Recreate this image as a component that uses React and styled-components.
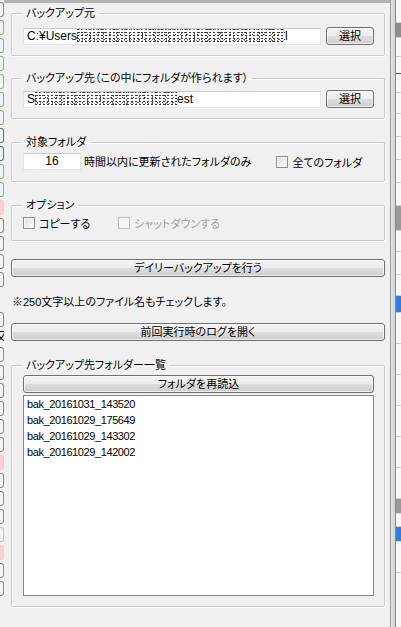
import React from "react";
import styled, {createGlobalStyle} from "styled-components";

const GlobalStyle = createGlobalStyle`
  html, body {
    margin: 0;
    padding: 0;
    background: #f0f0f0;
  }
  body {
    font-family: "Liberation Sans", "Noto Sans CJK JP", sans-serif;
    font-size: 11px;
    color: #000;
    font-feature-settings: "palt";
  }
`;

const Screen = styled.div`
  display: flex;
  width: 401px;
  height: 627px;
  overflow: hidden;
  background: #f0f0f0;
`;

const LeftStrip = styled.div`
  width: 4px;
  flex: 0 0 4px;
  display: flex;
  flex-direction: column;
  gap: 3px;
  padding-top: 2px;
  overflow: hidden;
`;

const StripTab = styled.div`
  flex: 0 0 auto;
  height: ${(p) => p.$h || 15}px;
  margin-top: ${(p) => p.$mt || 0}px;
  border: 1px solid ${(p) => p.$border || "#8a8a8a"};
  border-left: none;
  border-radius: 0 3px 3px 0;
  background: ${(p) => p.$fill || "#f4f4f4"};
  box-sizing: border-box;
`;

const StripChar = styled.div`
  height: 14px;
  margin-left: -5px;
  font-size: 12px;
  line-height: 14px;
`;

const Form = styled.div`
  flex: 1 1 auto;
  display: flex;
  flex-direction: column;
  border-top: 3px solid #b4b4b4;
  padding: 0 5px 0 7px;
`;

const Group = styled.fieldset`
  margin: ${(p) => p.$mt || 0}px 0 0;
  height: ${(p) => p.$h}px;
  box-sizing: border-box;
  padding: ${(p) => p.$pt || 4}px 10px 0 11px;
  border: 1px solid #c9c9c9;
  border-radius: 2px;
  box-shadow: inset 1px 1px 0 #fff, 1px 1px 0 #fff;
  min-width: 0;
  display: flex;
  flex-direction: column;
`;

const Legend = styled.legend`
  padding: 0 4px;
  margin-left: -1px;
  line-height: 14px;
  height: 14px;
`;

const Row = styled.div`
  display: flex;
  align-items: center;
  gap: ${(p) => p.$gap || 0}px;
`;

const TextBox = styled.div`
  flex: ${(p) => (p.$w ? `0 0 ${p.$w}px` : "1 1 auto")};
  height: 17px;
  box-sizing: border-box;
  background: #fff;
  border: 1px solid #e2e6ea;
  border-top-color: #c6cbd1;
  padding: 0 3px;
  font-size: 12px;
  line-height: 15px;
  white-space: nowrap;
  overflow: hidden;
  text-align: ${(p) => p.$align || "left"};
`;

const Noise = styled.span`
  display: inline-block;
  vertical-align: -3px;
  width: ${(p) => p.$w}px;
  height: 14px;
  background-image:
    radial-gradient(circle, #444 0.55px, transparent 0.85px),
    radial-gradient(circle, #777 0.6px, transparent 0.9px),
    radial-gradient(circle, #222 0.5px, transparent 0.8px),
    radial-gradient(circle, #999 0.6px, transparent 0.9px),
    radial-gradient(circle, #555 0.5px, transparent 0.8px),
    radial-gradient(circle, #333 0.5px, transparent 0.8px);
  background-size: 5px 7px, 7px 5px, 11px 9px, 3px 11px, 13px 4px, 4px 3px;
  background-position: 0 0, 2px 3px, 5px 1px, 1px 6px, 7px 2px, 3px 2px;
`;

const Button = styled.button`
  display: block;
  flex: ${(p) => (p.$w ? `0 0 ${p.$w}px` : "0 0 auto")};
  width: ${(p) => (p.$w ? `${p.$w}px` : "100%")};
  height: 18px;
  margin: ${(p) => p.$mt || 0}px 0 0;
  padding: 0;
  box-sizing: border-box;
  border: 1px solid #707070;
  border-radius: 3px;
  background: linear-gradient(#f3f3f3 0%, #ececec 48%, #dddddd 52%, #cfcfcf 100%);
  box-shadow: inset 0 0 0 1px rgba(255, 255, 255, 0.6);
  font: inherit;
  line-height: 15px;
  color: #000;
  text-align: center;
`;

const Label = styled.span`
  margin-left: ${(p) => p.$ml || 0}px;
  white-space: nowrap;
  line-height: 16px;
`;

const CheckLabel = styled.label`
  display: flex;
  align-items: center;
  gap: 4px;
  flex: ${(p) => (p.$w ? `0 0 ${p.$w}px` : "0 0 auto")};
  margin-left: ${(p) => p.$ml || 0}px;
  height: 16px;
  white-space: nowrap;
  color: ${(p) => (p.$disabled ? "#a0a0a0" : "#000")};
`;

const CheckBox = styled.span`
  width: 12px;
  height: 12px;
  box-sizing: border-box;
  border: 1px solid ${(p) => (p.$disabled ? "#c0c0c0" : "#8e8f8f")};
  background: ${(p) =>
    p.$disabled
      ? "#f4f4f4"
      : "linear-gradient(135deg, #dcdcdc 0%, #f0f0f0 60%, #fbfbfb 100%)"};
  box-shadow: inset 0 0 0 1px ${(p) => (p.$disabled ? "#f4f4f4" : "#f5f5f5")};
`;

const Note = styled.div`
  margin-top: 18px;
  height: 14px;
  line-height: 14px;
  padding-left: 1px;
  white-space: nowrap;
`;

const ListBox = styled.div`
  margin-top: 2px;
  height: 201px;
  box-sizing: border-box;
  background: #fff;
  border: 1px solid #828790;
  padding: 0 3px;
`;

const ListItem = styled.div`
  font-family: "Liberation Sans", sans-serif;
  font-size: 11px;
  line-height: 16px;
  letter-spacing: -0.4px;
`;

const RightFrame = styled.div`
  flex: 0 0 11px;
  display: flex;
`;

const FrameEdge = styled.div`
  flex: 0 0 6px;
  box-sizing: border-box;
  border-left: 1px solid #9a9a9a;
  border-right: 1px solid #8c8c8c;
  background: linear-gradient(90deg, #e6e6e6, #cfcfcf);
`;

const OtherPane = styled.div`
  flex: 1 1 auto;
  display: flex;
  flex-direction: column;
  background: #f7f7f7;
`;

const PaneBit = styled.div`
  flex: 0 0 ${(p) => p.$h}px;
  background: ${(p) => p.$bg || "transparent"};
  border-bottom: 1px solid ${(p) => p.$line || "#d4d4d4"};
`;

const leftTabs = [
  {border: "#8a8a8a"},
  {border: "#7cc07c"},
  {border: "#7cc07c"},
  {border: "#7cc07c"},
  {border: "#7cc07c"},
  {border: "#7cc07c"},
  {border: "#7cc07c"},
  {border: "#4a6fb5"},
  {border: "#4a6fb5"},
  {border: "#7cc07c"},
  {border: "#7cc07c"},
  {border: "#ffc8c8", fill: "#ffd0d0"},
  {border: "#8a8a8a"},
  {border: "#8a8a8a"},
  {border: "#8a8a8a"},
  {border: "#8a8a8a"},
  {border: "#8a8a8a", mt: 22},
];

const leftTabsLower = [
  {border: "#8a8a8a"},
  {border: "#8a8a8a"},
  {border: "#8a8a8a"},
  {border: "#8a8a8a"},
  {border: "#8a8a8a"},
  {border: "#8a8a8a"},
  {border: "#ffc8c8", fill: "#ffd0d0"},
  {border: "#8a8a8a"},
  {border: "#8a8a8a"},
  {border: "#8a8a8a"},
  {border: "#c0c0c0"},
  {border: "#ffc8c8", fill: "#ffd0d0"},
  {border: "#8a8a8a"},
  {border: "#8a8a8a"},
];

const paneBits = [
  {h: 22},
  {h: 14, bg: "#8c8c8c"},
  {h: 18},
  {h: 16, line: "#555"},
  {h: 18},
  {h: 20},
  {h: 22},
  {h: 22},
  {h: 22},
  {h: 22},
  {h: 24, bg: "#9a9a9a"},
  {h: 20},
  {h: 22},
  {h: 20},
  {h: 16, bg: "#2f7fd8"},
  {h: 30},
  {h: 30},
  {h: 30},
  {h: 30},
  {h: 30},
  {h: 30},
  {h: 14, bg: "#9a9a9a"},
  {h: 12},
  {h: 14, bg: "#2f7fd8"},
  {h: 30},
];

const folders = [
  "bak_20161031_143520",
  "bak_20161029_175649",
  "bak_20161029_143302",
  "bak_20161029_142002",
];

export default function App() {
  return (
    <>
      <GlobalStyle />
      <Screen>
        <LeftStrip>
          {leftTabs.map((t, i) => (
            <StripTab key={i} $border={t.border} $fill={t.fill} $mt={t.mt} />
          ))}
          <StripChar>又</StripChar>
          {leftTabsLower.map((t, i) => (
            <StripTab key={i} $border={t.border} $fill={t.fill} />
          ))}
        </LeftStrip>

        <Form>
          <Group $mt={3} $h={50} $pt={7}>
            <Legend>バックアップ元</Legend>
            <Row $gap={5}>
              <TextBox>
                C:¥Users<Noise $w={208} />l
              </TextBox>
              <Button $w={48}>選択</Button>
            </Row>
          </Group>

          <Group $mt={15} $h={48} $pt={5}>
            <Legend>バックアップ先（この中にフォルダが作られます）</Legend>
            <Row $gap={5}>
              <TextBox>
                S<Noise $w={142} />est
              </TextBox>
              <Button $w={48}>選択</Button>
            </Row>
          </Group>

          <Group $mt={16} $h={47} $pt={4}>
            <Legend>対象フォルダ</Legend>
            <Row>
              <TextBox $w={58} $align="center">16</TextBox>
              <Label $ml={3}>時間以内に更新されたフォルダのみ</Label>
              <CheckLabel $ml={25}>
                <CheckBox />
                全てのフォルダ
              </CheckLabel>
            </Row>
          </Group>

          <Group $mt={16} $h={43} $pt={3}>
            <Legend>オプション</Legend>
            <Row>
              <CheckLabel $w={95}>
                <CheckBox />
                コピーする
              </CheckLabel>
              <CheckLabel $disabled>
                <CheckBox $disabled />
                シャットダウンする
              </CheckLabel>
            </Row>
          </Group>

          <Button $mt={18}>デイリーバックアップを行う</Button>
          <Note>※250文字以上のファイル名もチェックします。</Note>
          <Button $mt={14}>前回実行時のログを開く</Button>

          <Group $mt={17} $h={249} $pt={3}>
            <Legend>バックアップ先フォルダー一覧</Legend>
            <Button>フォルダを再読込</Button>
            <ListBox>
              {folders.map((f) => (
                <ListItem key={f}>{f}</ListItem>
              ))}
            </ListBox>
          </Group>
        </Form>

        <RightFrame>
          <FrameEdge />
          <OtherPane>
            {paneBits.map((b, i) => (
              <PaneBit key={i} $h={b.h} $bg={b.bg} $line={b.line} />
            ))}
          </OtherPane>
        </RightFrame>
      </Screen>
    </>
  );
}
